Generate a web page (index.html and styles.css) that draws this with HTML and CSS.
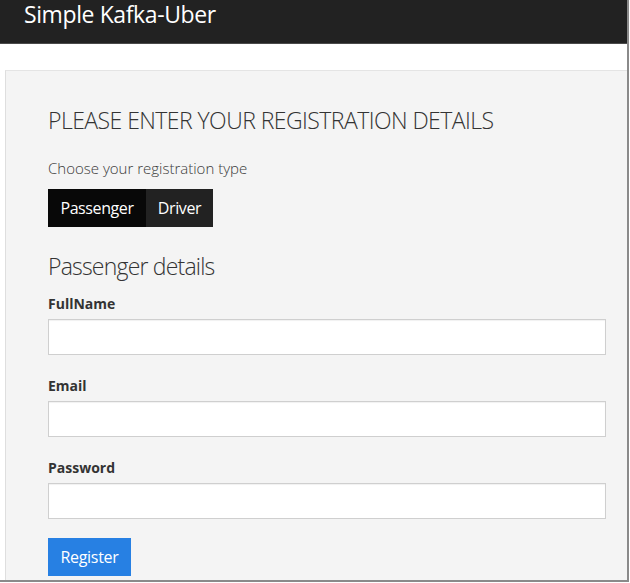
FILE: index.html
```html
<!DOCTYPE html>
<html lang="en">
<head>
<meta charset="utf-8">
<title>Simple Kafka-Uber</title>
<link rel="stylesheet" href="styles.css">
</head>
<body>
<div class="frame">
  <header class="navbar">
    <span class="brand">Simple Kafka-Uber</span>
  </header>
  <main class="panel">
    <h1 class="title">PLEASE ENTER YOUR REGISTRATION DETAILS</h1>
    <p class="lead">Choose your registration type</p>
    <div class="btn-group">
      <button class="btn btn-dark btn-active btn-passenger" type="button">Passenger</button>
      <button class="btn btn-dark btn-driver" type="button">Driver</button>
    </div>
    <h2 class="subtitle">Passenger details</h2>
    <form class="form">
      <div class="form-group">
        <label class="label">FullName</label>
        <input class="input" type="text">
      </div>
      <div class="form-group">
        <label class="label">Email</label>
        <input class="input" type="text">
      </div>
      <div class="form-group">
        <label class="label">Password</label>
        <input class="input" type="password">
      </div>
      <div class="actions">
        <button class="btn btn-primary" type="button">Register</button>
      </div>
    </form>
  </main>
</div>
</body>
</html>
```
FILE: styles.css
```css
* { box-sizing: border-box; }
html, body { margin: 0; padding: 0; background: #fff; }
body {
  font-family: "Open Sans", "Noto Sans", "Liberation Sans", sans-serif;
  color: #333;
}
.frame {
  width: 629px;
  height: 582px;
  border-right: 2px solid #8a8a8a;
  border-bottom: 2px solid #8a8a8a;
  overflow: hidden;
  background: #fff;
  display: flex;
  flex-direction: column;
}
.navbar {
  height: 44px;
  flex: none;
  background: #222;
  border-bottom: 1px solid #4a4a4a;
  padding-left: 24px;
  display: flex;
  align-items: flex-start;
}
.brand {
  color: #fff;
  font-size: 23px;
  font-weight: 400;
  line-height: 28px;
  letter-spacing: -0.4px;
}
.panel {
  margin-top: 26px;
  margin-left: 5px;
  flex: 1;
  background: #f4f4f4;
  border-top: 1px solid #e4e4e4;
  border-left: 1px solid #dedede;
  padding: 35px 21px 0 42px;
}
.title {
  margin: 0;
  font-size: 23px;
  font-weight: 300;
  line-height: 28px;
  color: #333;
  letter-spacing: -0.55px;
}
.lead {
  margin: 23px 0 10px;
  font-size: 15px;
  font-weight: 300;
  line-height: 22px;
  color: #3a3a3a;
}
.btn-group {
  display: flex;
}
.btn {
  border: 0;
  border-radius: 0;
  font-family: inherit;
  font-size: 16px;
  line-height: 22px;
  color: #fff;
  height: 38px;
  padding: 0;
  text-align: center;
  cursor: pointer;
  letter-spacing: -0.4px;
}
.btn-dark { background: #222; }
.btn-active { background: #080808; }
.btn-passenger { width: 98px; }
.btn-driver { width: 67px; }
.subtitle {
  margin: 25px 0 13px;
  font-size: 23px;
  font-weight: 300;
  line-height: 28px;
  color: #333;
  letter-spacing: -0.8px;
}
.form {
  display: flex;
  flex-direction: column;
  gap: 20px;
}
.form-group {
  display: flex;
  flex-direction: column;
  gap: 5px;
}
.label {
  font-size: 14px;
  font-weight: 700;
  line-height: 21px;
  color: #333;
}
.input {
  height: 36px;
  width: 100%;
  border: 1px solid #cfcfcf;
  box-shadow: inset 0 1px 1px rgba(0,0,0,0.06);
  background: #fff;
  margin: 0;
}
.actions {
  margin-top: -1px;
}
.btn-primary {
  background: #2780e3;
  width: 83px;
  letter-spacing: -0.3px;
}
```
